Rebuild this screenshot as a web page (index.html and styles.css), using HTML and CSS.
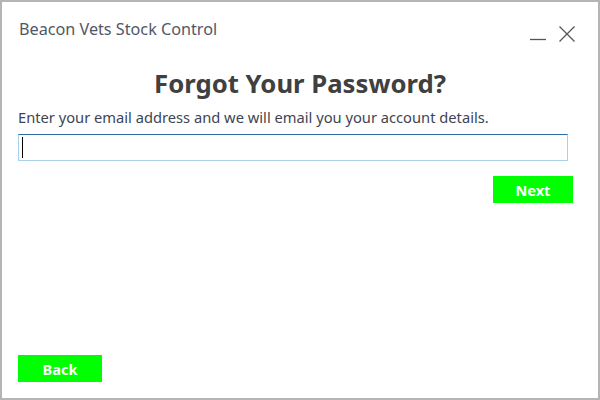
FILE: index.html
```html
<!DOCTYPE html>
<html>
<head>
<meta charset="utf-8">
<link rel="stylesheet" href="styles.css">
</head>
<body>
<div class="window">
  <div class="titlebar">
    <span class="app-title">Beacon Vets Stock Control</span>
    <div class="controls">
      <svg class="ctl" width="18" height="18" viewBox="0 0 18 18"><line x1="1" y1="14.5" x2="17" y2="14.5" stroke="#555" stroke-width="1.3"/></svg>
      <svg class="ctl" width="18" height="18" viewBox="0 0 18 18"><path d="M1.5 1.5 L16.5 16.5 M16.5 1.5 L1.5 16.5" stroke="#555" stroke-width="1.3" fill="none"/></svg>
    </div>
  </div>
  <div class="content">
    <h1 class="heading">Forgot Your Password?</h1>
    <p class="prompt">Enter your email address and we will email you your account details.</p>
    <div class="field"><span class="caret"></span></div>
    <div class="row-right"><button class="btn">Next</button></div>
    <div class="spacer"></div>
    <div class="row-left"><button class="btn btn-back">Back</button></div>
  </div>
</div>
</body>
</html>
```
FILE: styles.css
```css
html, body { margin: 0; padding: 0; background: #fff; }
.window {
  width: 600px; height: 400px; box-sizing: border-box;
  border: 2px solid #b4b4b4;
  display: flex; flex-direction: column;
  font-family: "Noto Sans", "Open Sans", sans-serif;
}
.titlebar {
  display: flex; justify-content: space-between; align-items: flex-start;
  padding: 16px 22px 0 17px; height: 38px;
}
.app-title { font-size: 16.2px; color: #4f5867; line-height: 22px; }
.controls { display: flex; gap: 11px; padding-top: 7px; }
.ctl { display: block; }
.content { flex: 1; display: flex; flex-direction: column; padding: 0 25px 16px 16px; }
.heading {
  margin: 11px 0 0; text-align: center; font-size: 25.7px; font-weight: 700;
  color: #404040; line-height: 34px; padding-left: 9px;
}
.prompt { margin: 6px 0 0; font-size: 14.7px; color: #3d4554; line-height: 20px; }
.field {
  margin-top: 7px; height: 27px; box-sizing: border-box; width: 550px;
  border: 1px solid #a9d1ec; border-top-color: #2b6ea6;
  display: flex; align-items: center; padding-left: 3px;
}
.caret { width: 1px; height: 21px; background: #000; }
.row-right { display: flex; justify-content: flex-end; margin-top: 15px; margin-right: 0; }
.btn {
  background: #00ff00; color: #fff; border: none; font-family: inherit;
  font-weight: 700; font-size: 14.5px; width: 80px; height: 27px; padding: 0;
}
.btn-back { width: 84px; }
.spacer { flex: 1; }
.row-left { display: flex; }
```
